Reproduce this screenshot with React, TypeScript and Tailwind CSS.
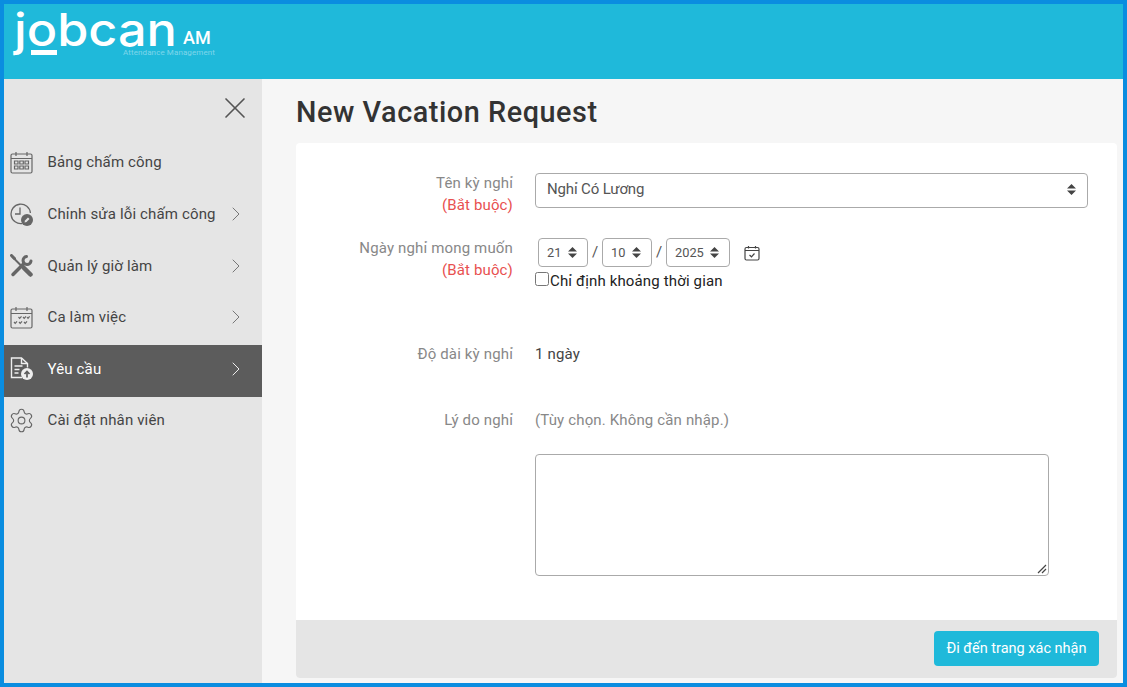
import { ChevronRight, Settings, X } from "lucide-react";
import type { ReactNode } from "react";

function CalendarFrame({ children }: { children: ReactNode }) {
  return (
    <svg width="23" height="23" viewBox="0 0 23 23" fill="none" stroke="currentColor" strokeWidth="1.2">
      <rect x="1" y="3" width="21" height="19" rx="1.5" />
      <path d="M1 7.5h21M6 1v4M17 1v4" />
      {children}
    </svg>
  );
}

function TableIcon() {
  return (
    <CalendarFrame>
      <path d="M4.5 10h3.5v3h-3.5zM9.8 10h3.5v3h-3.5zM15 10h3.5v3H15zM4.5 15h3.5v3h-3.5zM9.8 15h3.5v3h-3.5zM15 15h3.5v3H15z" />
    </CalendarFrame>
  );
}

function ShiftIcon() {
  return (
    <CalendarFrame>
      <path d="M8.5 11l1.2 1.300 1.800-2M13 11l1.200 1.300 1.800-2M17 11l1 1.300 1.600-2M4 16l1.200 1.300 1.800-2M9 16l1.200 1.300 1.800-2M14 16l1.200 1.300 1.800-2" />
    </CalendarFrame>
  );
}

function ClockEditIcon() {
  return (
    <svg width="23" height="23" viewBox="0 0 23 23" fill="none" stroke="currentColor" strokeWidth="1.3">
      <path d="M12.5 20.4A9.7 9.7 0 1 1 20.4 10" />
      <path d="M10 4.5v6.500H5" />
      <circle cx="17" cy="17" r="6" fill="currentColor" stroke="none" />
      <path d="M14.5 19.5l.5-2 3-3 1.500 1.500-3 3z" fill="#e5e5e5" stroke="none" />
    </svg>
  );
}

function ToolsIcon() {
  return (
    <svg width="23" height="23" viewBox="0 0 23 23" fill="none" stroke="currentColor" strokeLinecap="round">
      <path d="M2.500 3l9 9" strokeWidth="2" />
      <path d="M1.500 1.500l3 3" strokeWidth="3" />
      <path d="M14 14l6.500 6.500" strokeWidth="4.500" />
      <path d="M3 20.500L13.500 10" strokeWidth="3.500" />
      <path d="M16.500 2.500A4 4 0 1 0 21 7" strokeWidth="3" />
    </svg>
  );
}

function FileUploadIcon() {
  return (
    <svg width="23" height="23" viewBox="0 0 23 23" fill="none" stroke="currentColor" strokeWidth="1.4">
      <path d="M12 20.500H1.500V1h10l6 5.500v4" />
      <path d="M11.500 1v5.500h6M4.500 9h8M4.500 12.500h5M4.500 16h4" />
      <circle cx="17" cy="17" r="6" fill="currentColor" stroke="none" />
      <path d="M17 20.500v-6M14.500 17l2.500-2.500 2.500 2.500" stroke="#5c5c5c" strokeWidth="1.700" />
    </svg>
  );
}

function SortArrows() {
  return (
    <svg width="9" height="11" viewBox="0 0 9 11" fill="#444">
      <path d="M4.500 0L9 4.500H0zM4.500 11L0 6.500h9z" />
    </svg>
  );
}

function MenuItem({
  icon,
  label,
  arrow = true,
  active = false,
}: {
  icon: ReactNode;
  label: string;
  arrow?: boolean;
  active?: boolean;
}) {
  return (
    <div
      className={`flex h-[51.6px] items-center pb-[4px] pl-[6px] pr-[14px] ${
        active ? "bg-[#5c5c5c] text-white" : "text-[#444]"
      }`}
    >
      <span className={`flex h-[23px] w-[37.500px] shrink-0 items-center ${active ? "text-[#eee]" : "text-[#666]"}`}>{icon}</span>
      <span className="flex-1 text-[15px] tracking-[0.15px]">{label}</span>
      {arrow ? <ChevronRight size={24} strokeWidth={1} className={active ? "text-[#eee]" : "text-[#777]"} /> : null}
    </div>
  );
}

function DateSelect({ value, width }: { value: string; width: string }) {
  return (
    <div className={`flex h-[29px] ${width} items-center justify-between rounded-[4px] border border-[#aaa] pl-2 pr-[10px] text-[12.8px] text-[#555]`}>
      <span>{value}</span>
      <SortArrows />
    </div>
  );
}

function FieldLabel({ text, required = false }: { text: string; required?: boolean }) {
  return (
    <div className="w-[217px] shrink-0 text-right text-[15px] leading-[22px] tracking-[0.15px] text-[#888]">
      <p>{text}</p>
      {required ? <p className="text-[#e85050]">(Bắt buộc)</p> : null}
    </div>
  );
}

export default function App() {
  return (
    <div
      className="flex h-screen flex-col overflow-hidden border-4 border-[#0a8de0] bg-[#f6f6f6]"
      style={{ fontFamily: "Roboto, 'Noto Sans', sans-serif" }}
    >
      <header className="relative h-[75px] shrink-0 bg-[#1fb9da] text-white">
        <div
          className="absolute left-[10px] top-[8px] origin-left scale-x-[1.12] text-[45px] font-medium leading-[36px]"
          style={{ fontFamily: "Inter, sans-serif" }}
        >
          jobcan
        </div>
        <div className="absolute left-[27px] top-[46px] h-[5px] w-[26px] bg-white" />
        <div className="absolute left-[179px] top-[24px] text-[18px] font-medium leading-[20px]">AM</div>
        <div className="absolute left-[119px] top-[44px] text-[8px] leading-[10px] tracking-[0.1px] text-[#7fd6ea]">
          Attendance Management
        </div>
      </header>
      <div className="flex min-h-0 flex-1">
        <aside className="w-[258px] shrink-0 bg-[#e5e5e5]">
          <div className="flex h-[59.8px] items-center justify-end pb-[2px] pr-[9px] text-[#555]">
            <X size={36} strokeWidth={1.1} />
          </div>
          <MenuItem icon={<TableIcon />} label="Bảng chấm công" arrow={false} />
          <MenuItem icon={<ClockEditIcon />} label="Chỉnh sửa lỗi chấm công" />
          <MenuItem icon={<ToolsIcon />} label="Quản lý giờ làm" />
          <MenuItem icon={<ShiftIcon />} label="Ca làm việc" />
          <MenuItem icon={<FileUploadIcon />} label="Yêu cầu" active />
          <MenuItem icon={<Settings size={27} strokeWidth={1} className="-ml-[2px]" />} label="Cài đặt nhân viên" arrow={false} />
        </aside>
        <main className="flex min-w-0 flex-1 flex-col pl-[34px] pr-[6px]">
          <h1 className="h-[64px] pt-[15px] text-[28.8px] font-medium leading-[36px] tracking-[0.55px] text-[#333]">
            New Vacation Request
          </h1>
          <section className="flex h-[535px] flex-col overflow-hidden rounded-[4px] bg-white">
            <div className="flex-1 pt-[29px]">
              <div className="flex h-[65px] gap-[22px]">
                <FieldLabel text="Tên kỳ nghỉ" required />
                <div className="mt-[1px] flex h-[35px] w-[553px] items-center justify-between rounded-[4px] border border-[#aaa] pb-[3px] pl-[11px] pr-[11px] text-[15px] tracking-[-0.15px] text-[#555]">
                  <span>Nghỉ Có Lương</span>
                  <SortArrows />
                </div>
              </div>
              <div className="flex h-[106px] gap-[22px]">
                <FieldLabel text="Ngày nghỉ mong muốn" required />
                <div className="pt-[1px]">
                  <div className="flex items-center pl-[3px] text-[15px] text-[#555]">
                    <DateSelect value="21" width="w-[50px]" />
                    <span className="w-[14px] text-center">/</span>
                    <DateSelect value="10" width="w-[50px]" />
                    <span className="w-[14px] text-center">/</span>
                    <DateSelect value="2025" width="w-[64px]" />
                    <svg className="ml-[14px]" width="16" height="16" viewBox="0 0 16 16" fill="none" stroke="#444" strokeWidth="1.2">
                      <rect x="1" y="2.500" width="14" height="12.500" rx="1.500" />
                      <path d="M1 5.500h14M4.500 1v2.500M11.500 1v2.500M5.500 10l2 1.800 3-3.300" />
                    </svg>
                  </div>
                  <label className="mt-[3px] flex items-start text-[15px] leading-[22px] tracking-[0.15px] text-[#222]">
                    <input type="checkbox" className="m-0 mt-[2px] h-[14px] w-[14px] rounded-[2px]" />
                    <span className="ml-[1px]">Chỉ định khoảng thời gian</span>
                  </label>
                </div>
              </div>
              <div className="flex h-[66px] gap-[22px]">
                <FieldLabel text="Độ dài kỳ nghỉ" />
                <p className="text-[15px] leading-[22px] tracking-[0.15px] text-[#444]">1 ngày</p>
              </div>
              <div className="flex gap-[22px]">
                <FieldLabel text="Lý do nghỉ" />
                <div>
                  <p className="text-[15px] leading-[22px] tracking-[0.15px] text-[#888]">(Tùy chọn. Không cần nhập.)</p>
                  <div className="relative mt-[23px] h-[122px] w-[514px]">
                    <textarea className="block h-[122px] w-[514px] resize-none rounded-[4px] border border-[#aaa] bg-white" />
                    <svg className="pointer-events-none absolute bottom-[2px] right-[2px]" width="10" height="10" viewBox="0 0 10 10" stroke="#444" strokeWidth="1.200">
                      <path d="M1 9l8-8M5 9l4-4" />
                    </svg>
                  </div>
                </div>
              </div>
            </div>
            <div className="flex h-[58px] shrink-0 items-center justify-end bg-[#e5e5e5] pb-[2px] pr-[18px]">
              <button className="h-[35px] w-[165px] rounded-[4px] bg-[#1fb9da] pt-[1px] text-[14.5px] text-white">
                Đi đến trang xác nhận
              </button>
            </div>
          </section>
        </main>
      </div>
    </div>
  );
}
